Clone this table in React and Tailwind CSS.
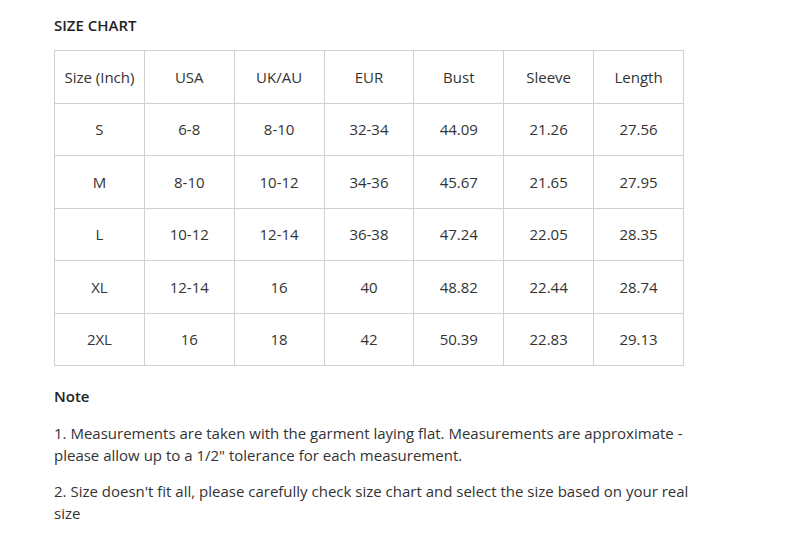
const rows = [
  ["S", "6-8", "8-10", "32-34", "44.09", "21.26", "27.56"],
  ["M", "8-10", "10-12", "34-36", "45.67", "21.65", "27.95"],
  ["L", "10-12", "12-14", "36-38", "47.24", "22.05", "28.35"],
  ["XL", "12-14", "16", "40", "48.82", "22.44", "28.74"],
  ["2XL", "16", "18", "42", "50.39", "22.83", "29.13"],
];

const head = ["Size (Inch)", "USA", "UK/AU", "EUR", "Bust", "Sleeve", "Length"];

export default function App() {
  return (
    <div className="w-[804px] h-[536px] bg-white pl-[54px] pt-[14px] text-[#333] font-['Open_Sans',sans-serif] text-[15px]">
      <h2 className="font-semibold text-[15px] leading-[22px] text-[#222]">SIZE CHART</h2>

      {/* table */}
      <table className="mt-[14px] border-collapse w-[630px] table-fixed">
        <thead>
          <tr>
            {head.map((h) => (
              <td key={h} className="border border-[#d0d0d0] h-[52.5px] text-center align-middle">
                {h}
              </td>
            ))}
          </tr>
        </thead>
        <tbody>
          {rows.map((r) => (
            <tr key={r[0]}>
              {r.map((c, i) => (
                <td key={i} className="border border-[#d0d0d0] h-[52.5px] text-center align-middle">
                  {c}
                </td>
              ))}
            </tr>
          ))}
        </tbody>
      </table>

      <div className="mt-[19px] font-semibold text-[#222] leading-[22px]">Note</div>
      <p className="mt-[15px] w-[640px] leading-[22px]">
        1. Measurements are taken with the garment laying flat. Measurements are approximate - please allow up to a 1/2" tolerance for each measurement.
      </p>
      <p className="mt-[14px] w-[640px] leading-[22px]">
        2. Size doesn't fit all, please carefully check size chart and select the size based on your real size
      </p>
    </div>
  );
}
